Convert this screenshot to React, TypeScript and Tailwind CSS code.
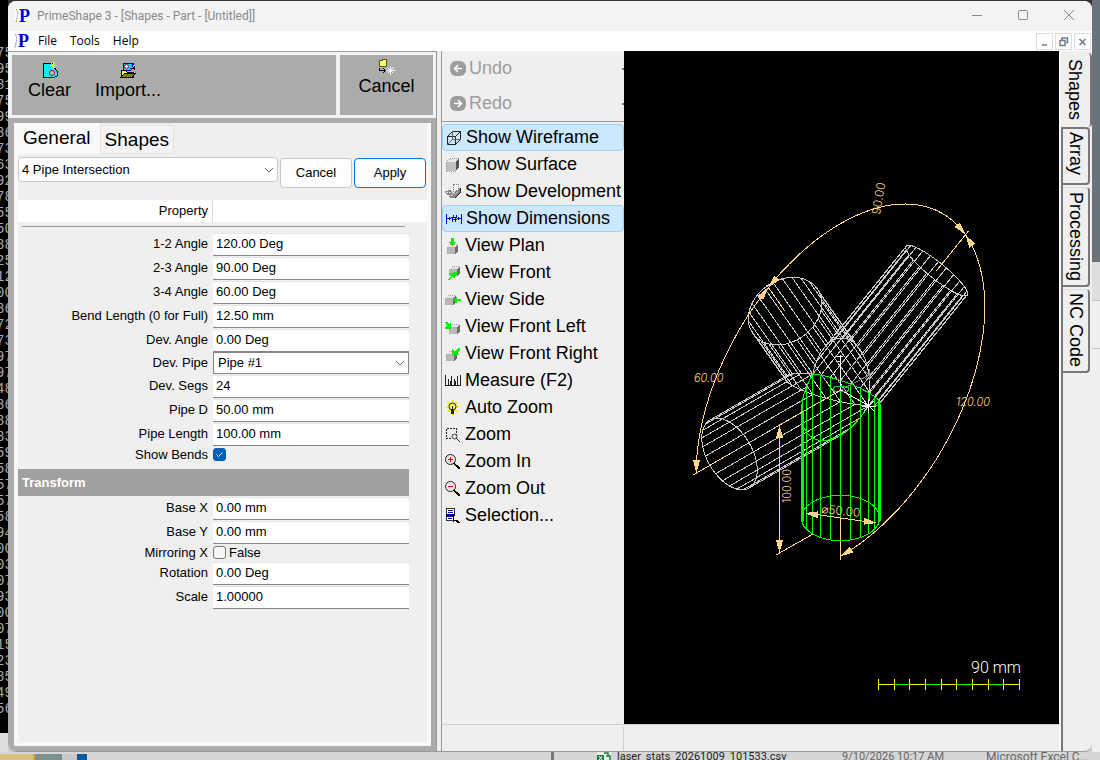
import React, { useState } from 'react';

type Point = [number, number];

/* ---------- isometric model of the pipe intersection ---------- */

const ORIGIN: Point = [840.5, 390];
// pixels per millimetre along each model axis
const U: Point = [1.11, -0.64];
const W: Point = [1.11, 0.64];
const V: Point = [0, -1.28];

const RADIUS = 25;
const LENGTH = 100;
const DIM_RADIUS = 130;
const SEGMENTS = 24;

const project = (u: number, v: number, w: number): Point => [
    ORIGIN[0] + u * U[0] + v * V[0] + w * W[0],
    ORIGIN[1] + u * U[1] + v * V[1] + w * W[1],
];

const rad = (deg: number) => (deg * Math.PI) / 180;

// angle is measured from straight down, in the plane of the pipes
const polar = (angle: number, distance: number, side = 0, w = 0): Point => {
    const s = Math.sin(rad(angle));
    const c = Math.cos(rad(angle));
    return project(distance * s + side * c, -distance * c + side * s, w);
};

const toPath = (points: Point[]) => 'M' + points.map(([x, y]) => `${x.toFixed(1)} ${y.toFixed(1)}`).join('L');

interface PipeSpec {
    angle: number;
    next: number;
    prev: number;
}

const PIPES: PipeSpec[] = [
    { angle: 120, next: 90, prev: 120 },
    { angle: 210, next: 60, prev: 90 },
    { angle: 270, next: 90, prev: 60 },
    { angle: 0, next: 120, prev: 90 },
];

const pipePath = ({ angle, next, prev }: PipeSpec) => {
    const at = (theta: number) => {
        const side = RADIUS * Math.cos(rad(theta));
        const w = RADIUS * Math.sin(rad(theta));
        const mitre = Math.abs(side) / Math.tan(rad((side > 0 ? next : prev) / 2));
        return { inner: polar(angle, mitre, side, w), outer: polar(angle, LENGTH, side, w) };
    };
    const lines: string[] = [];
    for (let i = 0; i < SEGMENTS; i++) {
        const { inner, outer } = at((i * 360) / SEGMENTS);
        lines.push(toPath([inner, outer]));
    }
    const inner: Point[] = [];
    const outer: Point[] = [];
    for (let i = 0; i <= 48; i++) {
        const p = at(i * 7.5);
        inner.push(p.inner);
        outer.push(p.outer);
    }
    return lines.join('') + toPath(inner) + toPath(outer);
};

const arcPath = () => {
    const points: Point[] = [];
    for (let a = 0; a <= 270; a += 3) points.push(polar(a, DIM_RADIUS));
    return toPath(points);
};

const Arrow: React.FC<{ tip: Point; tail: Point }> = ({ tip, tail }) => {
    const dx = tail[0] - tip[0];
    const dy = tail[1] - tip[1];
    const len = Math.hypot(dx, dy);
    const bx = tip[0] + (dx / len) * 13;
    const by = tip[1] + (dy / len) * 13;
    const nx = (-dy / len) * 3.5;
    const ny = (dx / len) * 3.5;
    return <path d={toPath([tip, [bx + nx, by + ny], [bx - nx, by - ny]]) + 'Z'} fill="#ffd68c" stroke="none" />;
};

const Viewport: React.FC = () => {
    const on = (a: number) => polar(a, DIM_RADIUS);
    const ticks = [878, 894, 909, 925, 941, 956, 972, 988, 1003, 1019];

    return (
        <svg viewBox="624 51 435 673" className="block size-full bg-black" role="img" aria-label="4 Pipe Intersection">
            <g fill="none" strokeWidth="1" shapeRendering="crispEdges">
                {PIPES.slice(0, 3).map(p => (
                    <path key={p.angle} d={pipePath(p)} stroke="#c8c8c8" />
                ))}
                <path d={pipePath(PIPES[3])} stroke="#00ff00" />
                <path d="M802.5 412V521M879.5 404V521" stroke="#00ff00" strokeWidth="2" />

                <path d="M841 390L869 375M865 371l8 8M873 371l-8 8M869 369v12" stroke="#808080" />
                <path d="M840.5 390V355M837 356h6M838 361h3" stroke="#fff" />
                <path d="M841 390L869 406M862 406h14M868.5 399v14M864 401l10 10M874 401l-10 10" stroke="#fff" />
                <ellipse cx="841" cy="389" rx="8" ry="3" stroke="#20c020" />

                <g stroke="#ffd68c">
                    <path d={arcPath()} />
                    {[0, 120, 210, 270].map(a => (
                        <path key={a} d={toPath([polar(a, LENGTH), polar(a, 133)])} />
                    ))}
                    <path d="M841 390L776 427M813 534L776 555M779.5 425V553" />
                    <path d="M806 513L876 523" />
                </g>
                <Arrow tip={on(0)} tail={polar(6, DIM_RADIUS)} />
                <Arrow tip={on(120)} tail={polar(115, DIM_RADIUS)} />
                <Arrow tip={on(120)} tail={polar(125, DIM_RADIUS)} />
                <Arrow tip={on(210)} tail={polar(205, DIM_RADIUS)} />
                <Arrow tip={on(210)} tail={polar(215, DIM_RADIUS)} />
                <Arrow tip={on(270)} tail={polar(265, DIM_RADIUS)} />
                <Arrow tip={[779.5, 425]} tail={[779.5, 500]} />
                <Arrow tip={[779.5, 553]} tail={[779.5, 500]} />
                <Arrow tip={[805, 513]} tail={[841, 518]} />
                <Arrow tip={[877, 523]} tail={[841, 518]} />

                {ticks.slice(1).map((x, i) => (
                    <path key={x} d={`M${ticks[i]} 684.5H${x}`} stroke={i % 2 ? '#00ff00' : '#ffff00'} />
                ))}
                {ticks.map(x => (
                    <path key={x} d={`M${x + 0.5} 679V690`} stroke="#ffff00" />
                ))}
            </g>
            <g fill="#ffd68c" className="font-['Inter','Liberation_Sans',sans-serif] text-[11px] font-light">
                <text x="694" y="382" className="italic">60.00</text>
                <text x="956" y="406" className="italic">120.00</text>
                <text transform="translate(880 215) rotate(-80)" className="text-[12px]">90.00</text>
                <text transform="translate(791 503) rotate(-90)">100.00</text>
                <text transform="translate(821 513) rotate(6)" className="text-[12px]">⌀50.00</text>
            </g>
            <text x="971" y="673" fill="#fff" className="font-['Roboto','Liberation_Sans',sans-serif] text-[16px] font-light">90 mm</text>
        </svg>
    );
};

/* ---------- icons ---------- */

const Icon: React.FC<{ children: React.ReactNode; size?: string }> = ({ children, size = 'size-4' }) => (
    <svg viewBox="0 0 16 16" className={`${size} shrink-0`} fill="none" shapeRendering="crispEdges" aria-hidden="true">
        {children}
    </svg>
);

const Logo: React.FC<{ boxed?: boolean }> = ({ boxed }) => (
    <svg viewBox="0 0 16 16" className={`size-4 shrink-0 ${boxed ? 'bg-white' : ''}`} aria-hidden="true">
        <path d="M1 1Q3.500 4 2.500 7.500T1 15" stroke="#888" strokeDasharray="2 1" fill="none" />
        <text x="4" y="14" fill="#0000e0" className="font-['Liberation_Serif',serif] text-[18px] font-bold">P</text>
    </svg>
);

const Cube: React.FC<{ x?: number; y?: number }> = ({ x = 0, y = 0 }) => (
    <g transform={`translate(${x} ${y})`}>
        <path d="M0 4L3 1H11L8 4Z" fill="#e4e4e4" />
        <path d="M0 4H8V11H0Z" fill="#b8b8b8" />
        <path d="M8 4L11 1V8L8 11Z" fill="#6c6c6c" />
        <path d="M0.500 4V11M3 1.500H11M0 4.500H8" stroke="#a8a8a8" strokeDasharray="1 1" />
    </g>
);

const Magnifier: React.FC<{ plus?: boolean }> = ({ plus }) => (
    <Icon>
        <circle cx="5.500" cy="5.500" r="5" fill="#f4e4e4" stroke="#222" shapeRendering="auto" />
        <path d="M3 5.500H8" stroke="#e00000" />
        {plus && <path d="M5.500 3V8" stroke="#e00000" />}
        <path d="M9 9L15 15" stroke="#000" strokeWidth="2" />
        <path d="M10 9L12 11" stroke="#e8d800" />
    </Icon>
);

const ICONS: Record<string, React.ReactNode> = {
    wireframe: (
        <Icon>
            <g stroke="#222" shapeRendering="auto">
                <path d="M1.500 6.500L6.500 1.500H14.500V9.500L9.500 14.500H1.500ZM1.500 6.500H9.500V14.500M9.500 6.500L14.500 1.500" />
                <path d="M6.500 1.500V9.500H14.500M6.500 9.500L1.500 14.500" stroke="#666" />
            </g>
        </Icon>
    ),
    surface: (
        <Icon>
            <path d="M1 5L5 1H14L11 5Z" fill="#e8e8e8" />
            <path d="M1 5H11V14H1Z" fill="#c0c0c0" />
            <path d="M11 5L14 1V10L11 14Z" fill="#555" />
            <path d="M1.500 5V14.500H11M1 5.500L5 1.500H14" stroke="#999" strokeDasharray="1 1" />
        </Icon>
    ),
    development: (
        <Icon>
            <path d="M8.500 0.500H13.500V7H8.500Z" stroke="#777" strokeDasharray="1 1" fill="#fafafa" />
            <path d="M0 7L5 6L8 9L12 6L15 4V9L10 14H6L1 10Z" fill="#888" />
            <path d="M1 8H8M3 11L7 11L12 8" stroke="#ddd" strokeDasharray="2 1" />
            <path d="M10 14L15 9V4" stroke="#222" />
        </Icon>
    ),
    dimensions: (
        <Icon>
            <g stroke="#0000e8">
                <path d="M0.500 3V13M15.500 3V13M1 7.500H5M11 7.500H15M3.500 6V9M12.500 6V9M5 6.500H11M6 8.500H11" />
                <path d="M7.500 4L6.500 11M10.500 4L9.500 11" />
            </g>
        </Icon>
    ),
    plan: (
        <Icon>
            <Cube x={2} y={5} />
            <path d="M6 0H9V4H12L7.500 8L3 4H6Z" fill="#00f000" />
        </Icon>
    ),
    front: (
        <Icon>
            <Cube x={4} y={0} />
            <path d="M2 15L7 11L3 8L13 7L9 14L8 12L4 15Z" fill="#00f000" />
        </Icon>
    ),
    side: (
        <Icon>
            <Cube x={0} y={2} />
            <path d="M9 8L12 4V7H16V9H12V12Z" fill="#00f000" />
        </Icon>
    ),
    frontLeft: (
        <Icon>
            <Cube x={4} y={4} />
            <path d="M0 3H2L4 5L6 3V10H0V8L2 7Z" fill="#00f000" />
        </Icon>
    ),
    frontRight: (
        <Icon>
            <Cube x={1} y={4} />
            <path d="M15 2V5L12 7L14 9H7V3L10 5L13 2Z" fill="#00f000" />
        </Icon>
    ),
    measure: (
        <Icon>
            <path d="M0.500 2V13M15.500 2V13M3.500 6V12M6.500 3V12M9.500 6V12M12.500 3V12M5.500 8V12M10.500 8V12" stroke="#222" />
            <path d="M0 12.500H16" stroke="#222" />
        </Icon>
    ),
    bulb: (
        <Icon>
            <path d="M7.500 0V15M1 7H14M3 2L12 12M12 2L3 12" stroke="#fff000" strokeWidth="2" />
            <circle cx="7.500" cy="6.500" r="3.500" fill="#fff860" stroke="#222" shapeRendering="auto" />
            <path d="M6 10H9V14H6Z" fill="#222" />
            <path d="M7.500 6V10" stroke="#222" />
        </Icon>
    ),
    zoom: (
        <Icon>
            <path d="M1.500 1.500H11.500V8M1.500 1.500V11.500H7" stroke="#222" strokeDasharray="2 1" />
            <circle cx="9.500" cy="9.500" r="2.500" fill="#ddd" stroke="#444" shapeRendering="auto" />
            <path d="M11 11L15 15" stroke="#222" />
        </Icon>
    ),
    zoomIn: <Magnifier plus />,
    zoomOut: <Magnifier />,
    selection: (
        <Icon>
            <path d="M1.500 0.500H9.500V12.500H1.500Z" fill="#fff" stroke="#333" />
            <path d="M3 2.500H8M3 4.500H8M3 10.500H7" stroke="#0000a0" />
            <path d="M1 6H10V9H1Z" fill="#0000a0" />
            <path d="M8 6V14L10 12L14 15" stroke="#000" fill="#fff" />
            <path d="M11 12L15 15" stroke="#000" />
        </Icon>
    ),
};

const HistoryIcon: React.FC<{ forward?: boolean }> = ({ forward }) => (
    <svg viewBox="0 0 16 16" className="size-4 shrink-0" aria-hidden="true">
        <rect width="16" height="15" rx="6" fill="#9d9d9d" />
        <path
            d={forward ? 'M4 7.500H11M8 4L11.500 7.500L8 11' : 'M12 7.500H5M8 4L4.500 7.500L8 11'}
            stroke="#fff"
            strokeWidth="1.500"
            fill="none"
        />
    </svg>
);

const Chevron: React.FC = () => (
    <svg viewBox="0 0 10 6" className="pointer-events-none absolute top-1/2 right-1 h-1.5 w-2.5 -translate-y-1/2" aria-hidden="true">
        <path d="M1 1L5 5L9 1" stroke="#666" fill="none" />
    </svg>
);

/* ---------- left panel ---------- */

const TextRow: React.FC<{ id: string; label: string; value: string }> = ({ id, label, value }) => (
    <div className="flex h-6 items-center">
        <label htmlFor={id} className="w-[190px] shrink-0 text-right">{label}</label>
        <input
            id={id}
            defaultValue={value}
            className="ml-[5px] h-[23px] min-w-0 flex-1 border-t border-b border-t-[#e6e6e6] border-b-[#868686] bg-white px-[3px] pb-0.5 outline-none"
        />
    </div>
);

const CheckRow: React.FC<{ id: string; label: string; text?: string; initial?: boolean }> = ({ id, label, text, initial = false }) => {
    const [checked, setChecked] = useState(initial);
    return (
        <div className="flex h-[17px] items-center">
            <label htmlFor={id} className="w-[190px] shrink-0 text-right">{label}</label>
            <span className="relative ml-[5px] flex size-[13px]">
                <input
                    id={id}
                    type="checkbox"
                    checked={checked}
                    onChange={e => setChecked(e.target.checked)}
                    className="size-[13px] appearance-none rounded-[3px] border border-[#777] bg-[#f7f7f7] checked:border-[#005fb8] checked:bg-[#005fb8]"
                />
                {checked && (
                    <svg viewBox="0 0 13 13" className="pointer-events-none absolute inset-0" aria-hidden="true">
                        <path d="M3.500 6.500L5.500 8.500L9.500 4.500" stroke="#fff" fill="none" />
                    </svg>
                )}
            </span>
            {text && <span className="ml-[3px]">{text}</span>}
        </div>
    );
};

const ShapePanel: React.FC = () => (
    <section className="flex w-[429px] shrink-0 flex-col border-t border-r border-[#9a9a9a] bg-[#f2f2f2]">
        <div className="flex h-[66px] gap-1 p-[3px] pl-1 text-[18px] leading-5">
            <div className="flex flex-1 items-start gap-6 bg-[#ababab] pt-[7px] pl-4">
                <button className="flex flex-col items-center gap-0.5">
                    <Icon>
                        <path d="M1 1H10L11 4L15 9V14L13 15H1V1Z" fill="#00f0ff" stroke="#000" />
                        <path d="M8 3.500H14M11 0V7M9 1L13 6M13 1L9 6" stroke="#ffff00" />
                        <circle cx="10" cy="11" r="2.500" stroke="#e00000" fill="#9cc" shapeRendering="auto" />
                    </Icon>
                    Clear
                </button>
                <button className="flex flex-col items-center gap-0.5">
                    <Icon>
                        <path d="M3 1H14L12 4L14 6L9 9L3 8Z" fill="#00d8ff" stroke="#0000d0" />
                        <circle cx="6.500" cy="4.500" r="2" stroke="#e00000" fill="#fff" shapeRendering="auto" />
                        <path d="M1 8H5L7 10H13V15H1Z" fill="#ffff30" stroke="#000" />
                        <path d="M1 15L5 11H16L12 15Z" fill="#808000" stroke="#000" />
                        <path d="M10 6L14 7M14 4V8" stroke="#000" />
                    </Icon>
                    Import...
                </button>
            </div>
            <div className="flex w-[93px] justify-center bg-[#ababab] pt-1">
                <button className="flex flex-col items-center gap-px self-start">
                    <Icon>
                        <path d="M0.500 1.500H3L4 0.500H7V7.500H0.500Z" fill="#ffff60" stroke="#555" />
                        <path d="M0.500 9V11.500H6M4 9L6.500 11.500L4 14" stroke="#000" />
                        <path d="M7 11.500H16M11.500 7V16M8.500 8.500L14.500 14.500M14.500 8.500L8.500 14.500" stroke="#fff" />
                    </Icon>
                    Cancel
                </button>
            </div>
        </div>
        <div className="flex flex-1 flex-col border-[5px] border-l-[6px] border-[#ababab] bg-[#efefef] text-[13px]">
            <div className="flex flex-1 flex-col border-r-4 border-b-4 border-[#f8f8f8]">
                <div role="tablist" className="flex h-[31px] items-end text-[19px] leading-6">
                    <button role="tab" aria-selected="true" className="h-full bg-[#f9f9f9] px-[9px] pb-0.5">General</button>
                    <button role="tab" aria-selected="false" className="h-[29px] border border-[#e3e3e3] bg-[#f3f3f3] px-1">Shapes</button>
                </div>
                <div className="flex flex-1 flex-col border-l-4 border-[#f8f8f8]">
                    <div className="flex items-start gap-0.5 pt-[3px] pr-px">
                        <div className="relative min-w-0 flex-1">
                            <select aria-label="Shape" className="h-[25px] w-full appearance-none rounded-sm border border-[#c8c8c8] bg-white px-[3px]">
                                <option>4 Pipe Intersection</option>
                            </select>
                            <Chevron />
                        </div>
                        <button className="mt-px h-[30px] w-[72px] rounded border border-[#c8c8c8] bg-[#fdfdfd]">Cancel</button>
                        <button className="mt-px h-[30px] w-[72px] rounded border border-[#0078d4] bg-[#fdfdfd]">Apply</button>
                    </div>
                    <div className="mt-3 flex h-[22px] items-center bg-white">
                        <span className="h-full w-[195px] border-r border-[#dcdcdc] pr-1 text-right leading-[22px]">Property</span>
                    </div>
                    <form className="mr-[18px]" onSubmit={e => e.preventDefault()}>
                        <hr className="mt-1 mr-1 mb-[5px] ml-1 border-[#999]" />
                        <TextRow id="angle12" label="1-2 Angle" value="120.00 Deg" />
                        <TextRow id="angle23" label="2-3 Angle" value="90.00 Deg" />
                        <TextRow id="angle34" label="3-4 Angle" value="60.00 Deg" />
                        <TextRow id="bend" label="Bend Length (0 for Full)" value="12.50 mm" />
                        <TextRow id="devAngle" label="Dev. Angle" value="0.00 Deg" />
                        <div className="flex h-[22px] items-center">
                            <label htmlFor="devPipe" className="w-[190px] shrink-0 text-right">Dev. Pipe</label>
                            <div className="relative ml-[5px] min-w-0 flex-1">
                                <select id="devPipe" className="block h-[22px] w-full appearance-none border border-[#868686] bg-white px-1">
                                    <option>Pipe #1</option>
                                </select>
                                <Chevron />
                            </div>
                        </div>
                        <TextRow id="segs" label="Dev. Segs" value="24" />
                        <TextRow id="pipeD" label="Pipe D" value="50.00 mm" />
                        <TextRow id="pipeLength" label="Pipe Length" value="100.00 mm" />
                        <CheckRow id="bends" label="Show Bends" initial />
                        <h2 className="mt-1.5 bg-[#a0a0a0] pl-1 font-bold leading-[27px] text-white">Transform</h2>
                        <TextRow id="baseX" label="Base X" value="0.00 mm" />
                        <TextRow id="baseY" label="Base Y" value="0.00 mm" />
                        <CheckRow id="mirror" label="Mirroring X" text="False" />
                        <TextRow id="rotation" label="Rotation" value="0.00 Deg" />
                        <TextRow id="scale" label="Scale" value="1.00000" />
                    </form>
                </div>
            </div>
        </div>
    </section>
);

/* ---------- tool list ---------- */

const TOOLS = [
    { icon: 'wireframe', label: 'Show Wireframe', active: true },
    { icon: 'surface', label: 'Show Surface' },
    { icon: 'development', label: 'Show Development' },
    { icon: 'dimensions', label: 'Show Dimensions', active: true },
    { icon: 'plan', label: 'View Plan' },
    { icon: 'front', label: 'View Front' },
    { icon: 'side', label: 'View Side' },
    { icon: 'frontLeft', label: 'View Front Left' },
    { icon: 'frontRight', label: 'View Front Right' },
    { icon: 'measure', label: 'Measure (F2)' },
    { icon: 'bulb', label: 'Auto Zoom' },
    { icon: 'zoom', label: 'Zoom' },
    { icon: 'zoomIn', label: 'Zoom In' },
    { icon: 'zoomOut', label: 'Zoom Out' },
    { icon: 'selection', label: 'Selection...' },
];

const ToolList: React.FC = () => (
    <nav className="flex w-[182px] shrink-0 flex-col overflow-hidden text-[18px] whitespace-nowrap">
        <div className="flex h-[71px] flex-col border-b border-[#9a9a9a] text-[#9d9d9d]">
            {['Undo', 'Redo'].map(name => (
                <button key={name} disabled className="flex h-[35px] items-center gap-[3px] pl-2">
                    <HistoryIcon forward={name === 'Redo'} />
                    {name}
                    <span className="ml-auto h-0.5 w-0.5 bg-[#777]" />
                </button>
            ))}
        </div>
        <div className="pt-0.5">
            {TOOLS.map(tool => (
                <button
                    key={tool.label}
                    className={`flex h-[27px] w-full items-center gap-1 border ${tool.active ? 'rounded-sm border-[#99d1ff] bg-[#cce8ff] pl-[3px]' : 'border-transparent pl-0.5'}`}
                >
                    {ICONS[tool.icon]}
                    {tool.label}
                </button>
            ))}
        </div>
    </nav>
);

/* ---------- right side tabs ---------- */

const SideTabs: React.FC = () => (
    <div role="tablist" className="flex w-[33px] shrink-0 flex-col border-l-2 border-[#fafafa] pt-0.5 text-[18px] leading-6">
        <button role="tab" aria-selected="true" className="h-[74px] w-[31px] rounded-r-sm border-r-2 border-[#777] pr-0.5 [writing-mode:vertical-rl]">Shapes</button>
        <div className="flex flex-1 flex-col gap-0.5 border-l-2 border-[#777]">
            <button role="tab" aria-selected="false" className="h-[58px] w-[27px] rounded-r-sm border-t-2 border-r-2 border-b-2 border-[#777] pb-1 [writing-mode:vertical-rl]">Array</button>
            <button role="tab" aria-selected="false" className="h-[100px] w-[27px] rounded-r-sm border-t border-r-2 border-b-2 border-[#777] border-t-[#ddd] [writing-mode:vertical-rl]">Processing</button>
            <button role="tab" aria-selected="false" className="h-[84px] w-[27px] rounded-r-sm border-t border-r-2 border-b-2 border-[#777] border-t-[#ddd] [writing-mode:vertical-rl]">NC Code</button>
        </div>
    </div>
);

/* ---------- window chrome ---------- */

const TitleBar: React.FC = () => (
    <header className="flex h-[30px] shrink-0 items-center bg-[#f3f3f3] pr-[17px] pl-[7px] text-[12px] text-[#8a8a8a]">
        <Logo boxed />
        <h1 className="ml-1.5 font-['Roboto','Noto_Sans',sans-serif]">PrimeShape 3 - [Shapes - Part - [Untitled]]</h1>
        <div className="ml-auto flex gap-[34px]">
            <button aria-label="Minimize">
                <svg viewBox="0 0 12 12" className="size-3" stroke="#8a8a8a" fill="none"><path d="M1 5.500H11" /></svg>
            </button>
            <button aria-label="Maximize">
                <svg viewBox="0 0 12 12" className="size-3" stroke="#8a8a8a" fill="none"><rect x="1.500" y="0.500" width="9" height="9" rx="1" /></svg>
            </button>
            <button aria-label="Close">
                <svg viewBox="0 0 12 12" className="size-3" stroke="#8a8a8a" fill="none"><path d="M1 0L11 10M11 0L1 10" /></svg>
            </button>
        </div>
    </header>
);

const MDI_BUTTONS = [
    { name: 'Minimize document', path: 'M3 9H8' },
    { name: 'Restore document', path: 'M4 4V2H9.500V6.500H8M2 4.500H7V9.500H2Z' },
    { name: 'Close document', path: 'M2.500 3L8.500 9M8.500 3L2.500 9' },
];

const MenuBar: React.FC = () => (
    <div className="flex h-5 shrink-0 items-center bg-white pr-px pl-1.5 font-['Open_Sans','Noto_Sans',sans-serif] text-[12px]">
        <Logo />
        <nav className="ml-2 flex gap-[13px]">
            <button>File</button>
            <button>Tools</button>
            <button>Help</button>
        </nav>
        <div className="ml-auto flex gap-0.5">
            {MDI_BUTTONS.map(b => (
                <button key={b.name} aria-label={b.name} className="flex size-[17px] items-center justify-center border border-[#dedede]">
                    <svg viewBox="0 0 11 11" className="size-[11px]" stroke="#6c7a89" strokeWidth="1.500" fill="none"><path d={b.path} /></svg>
                </button>
            ))}
        </div>
    </div>
);

/* ---------- what shows round the window ---------- */

const CONSOLE_LINES = '75 95 81 75 99 86 73 63 92 78 55 50 88 25 12 00 86 72 73 97 97 48 86 88 83 59 58 57 57 58 94 00 03 07 93 00 07 15 23 85 49 56'.split(' ');

const ConsoleEdge: React.FC = () => (
    <div className="w-2 shrink-0 overflow-hidden bg-[#dedede]">
        <div className="h-[733px] bg-black pt-[45px] font-['Liberation_Mono',monospace] text-[14px] leading-4 text-[#a8a8a8]">
            {CONSOLE_LINES.map((line, i) => (
                <div key={i} className="-ml-1">{line}</div>
            ))}
        </div>
    </div>
);

const DesktopEdge: React.FC = () => (
    <div className="flex w-2 shrink-0 flex-col bg-[#efefef]">
        <div className="h-[262px] bg-[#68737a]" />
        <div className="h-[39px] border-b border-[#c4c4c4] bg-[#dedede]" />
        <div className="h-12 border-b border-[#c4c4c4]" />
    </div>
);

const ExplorerRow: React.FC = () => (
    <div className="flex h-2 shrink-0 items-start overflow-hidden bg-[#d6d6d6] font-['Roboto','Noto_Sans',sans-serif] text-[12px] leading-[10px] text-[#666]">
        <div className="mt-0.5 flex h-1.5 w-[87px]">
            <span className="w-[35px] border-r-2 border-[#e0a030] bg-[#d8c080]" />
            <span className="w-[27px] bg-[#7c908e]" />
            <span className="w-[15px] bg-[#c8c8c8]" />
            <span className="flex-1 bg-[#0a5a9c]" />
        </div>
        <span className="ml-[464px] h-2 w-[3px] bg-[#777]" />
        <svg viewBox="0 0 14 8" className="ml-[43px] h-2 w-3.5" aria-hidden="true">
            <path d="M0 0H14V8H0Z" fill="#e8efe9" />
            <path d="M0 3H7V8H0Z" fill="#1f7a45" />
            <path d="M2 4L5 8M5 4L2 8" stroke="#fff" />
            <path d="M7 1H11V4H13V8M9 4H11" stroke="#1f7a45" strokeWidth="1.500" fill="none" />
        </svg>
        <span className="ml-1.5 w-[225px] text-[11px] text-[#222]">laser_stats_20261009_101533.csv</span>
        <span className="w-[144px] text-[11px]">9/10/2026 10:17 AM</span>
        <span className="whitespace-nowrap">Microsoft Excel C...</span>
    </div>
);

const App: React.FC = () => (
    <div className="flex h-screen min-h-[760px] flex-col overflow-hidden font-['Liberation_Sans',Arial,sans-serif] text-black">
        <div className="flex min-h-0 flex-1">
            <ConsoleEdge />
            <main className="flex min-w-0 flex-1 bg-linear-to-b from-[#333] from-50% to-[#d0d0d0] to-50% pt-px">
                <div className="flex min-w-0 flex-1 flex-col overflow-hidden rounded-lg border-b border-[#999] bg-[#efefef]">
                    <TitleBar />
                    <MenuBar />
                    <div className="flex min-h-0 flex-1">
                        <ShapePanel />
                        <div className="ml-1 flex min-w-0 flex-1 flex-col border-l border-[#9a9a9a]">
                            <div className="flex min-h-0 flex-1">
                                <ToolList />
                                <div className="min-w-0 flex-1">
                                    <Viewport />
                                </div>
                            </div>
                            <footer className="flex h-[27px] shrink-0 border-t border-[#d0d0d0]">
                                <span className="mt-0.5 w-[182px] border-r border-[#d0d0d0]" />
                            </footer>
                        </div>
                        <SideTabs />
                    </div>
                </div>
            </main>
            <DesktopEdge />
        </div>
        <ExplorerRow />
    </div>
);

export default App;
